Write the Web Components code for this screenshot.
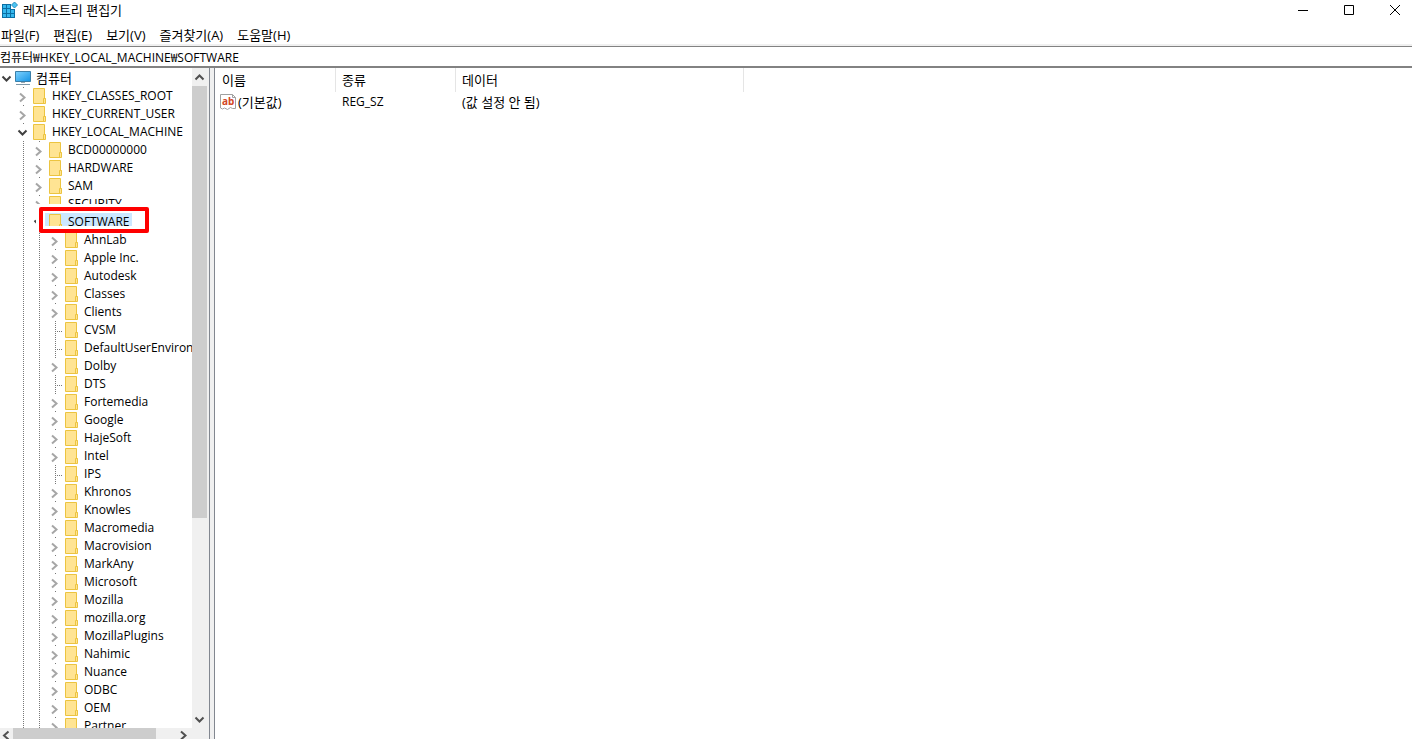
<!DOCTYPE html>
<html lang="ko">
<head>
<meta charset="utf-8">
<title>레지스트리 편집기</title>
<style>
    body {
        margin: 0;
        height: 100vh;
        overflow: hidden;
        background: #fff;
        color: #000;
        font-family: "Open Sans", "Noto Sans CJK KR", sans-serif;
        font-size: 12px;
    }
</style>
</head>
<body>
<reg-window></reg-window>

<script>
const chevrons = {
    right: '<svg width="11" height="11" viewBox="0 0 11 11"><path d="M3 1.5 7.5 5.5 3 9.5" fill="none" stroke="currentColor" stroke-width="2"/></svg>',
    left: '<svg width="11" height="11" viewBox="0 0 11 11"><path d="M7.5 1.5 3 5.5 7.5 9.5" fill="none" stroke="currentColor" stroke-width="2"/></svg>',
    down: '<svg width="11" height="11" viewBox="0 0 11 11"><path d="M1.5 3.5 5.5 7.5 9.5 3.5" fill="none" stroke="currentColor" stroke-width="2"/></svg>',
    up: '<svg width="11" height="11" viewBox="0 0 11 11"><path d="M1.5 7.5 5.5 3.5 9.5 7.5" fill="none" stroke="currentColor" stroke-width="2"/></svg>'
};

const folderIcon = `
    <svg width="16" height="18" viewBox="0 0 16 18" preserveAspectRatio="xMinYMin slice">
        <path d="M2.5 1.5h11v10h1v5h-12z" fill="#ffe493" stroke="#ecc440"/>
        <path d="M12.5 16v-4.5h2" fill="none" stroke="#ecc440"/>
    </svg>`;

const computerIcon = `
    <svg width="16" height="18" viewBox="0 0 16 18">
        <defs>
            <linearGradient id="screen" x2="1" y2="1">
                <stop offset="0" stop-color="#7fd3ff"/>
                <stop offset="1" stop-color="#1593e4"/>
            </linearGradient>
        </defs>
        <path d="M.5 2.5h15v10H.5z" fill="url(#screen)" stroke="#3b7fa8"/>
        <path d="M6 13h4v1H6z" fill="#9aa9b3"/>
        <path d="M1 15.5h14" stroke="#7d97a8"/>
    </svg>`;

class RegTitlebar extends HTMLElement {
    constructor() {
        super();
        this.attachShadow({ mode: 'open' });
        this.shadowRoot.innerHTML = `
            <style>
                :host {
                    display: flex;
                    align-items: center;
                    height: 20px;
                    padding-bottom: 2px;
                }
                .logo { display: block; margin: 0 5px 0 2px; }
                h1 { flex: 1; margin: 0; font-size: 13px; font-weight: normal; line-height: 18px; }
                button {
                    width: 46px;
                    height: 20px;
                    padding: 0;
                    border: 0;
                    background: none;
                    display: grid;
                    place-items: center;
                }
                button:last-child { margin-right: -6px; }
            </style>
            <svg class="logo" width="16" height="18" viewBox="0 0 16 18">
                <path d="M0 3h9v5h4v9H0z" fill="#0b6fa4"/>
                <path d="M1 4h3v3H1zM5 4h3v3H5zM1 8h3v4H1zM5 8h3v4H5zM9 9h3v3H9zM1 13h3v3H1zM5 13h3v3H5zM9 13h3v3H9z" fill="#35b8ee"/>
                <path d="M12.5 1 15.5 4 12.5 7 9.5 4z" fill="#4cc4f2" stroke="#2a8fc0"/>
            </svg>
            <h1><slot></slot></h1>
            <button aria-label="최소화"><svg width="10" height="10"><path d="M0 5.5h10" stroke="#000"/></svg></button>
            <button aria-label="최대화"><svg width="10" height="10"><path d="M.5.5h9v9h-9z" fill="none" stroke="#000"/></svg></button>
            <button aria-label="닫기"><svg width="10" height="10"><path d="M0 0 10 10M10 0 0 10" stroke="#000"/></svg></button>
        `;
    }
}
customElements.define('reg-titlebar', RegTitlebar);

class RegMenubar extends HTMLElement {
    constructor() {
        super();
        this.attachShadow({ mode: 'open' });
        this.shadowRoot.innerHTML = `
            <style>
                :host {
                    display: flex;
                    gap: 14px;
                    padding: 4px 1px 0;
                    border-bottom: 2px solid #f0f0f0;
                }
                button {
                    padding: 0;
                    border: 0;
                    background: none;
                    color: inherit;
                    font: inherit;
                    font-size: 13px;
                    line-height: 18px;
                }
            </style>
        `;
        for (const label of ['파일(F)', '편집(E)', '보기(V)', '즐겨찾기(A)', '도움말(H)']) {
            const button = document.createElement('button');
            button.textContent = label;
            this.shadowRoot.appendChild(button);
        }
    }
}
customElements.define('reg-menubar', RegMenubar);

class RegAddress extends HTMLElement {
    constructor() {
        super();
        this.attachShadow({ mode: 'open' });
        this.shadowRoot.innerHTML = `
            <style>
                :host {
                    display: flex;
                    border-top: 1px solid #828282;
                    border-bottom: 2px solid #828282;
                }
                input {
                    flex: 1;
                    height: 19px;
                    padding: 0;
                    border: 0;
                    outline: 0;
                    background: none;
                    color: inherit;
                    font: inherit;
                }
            </style>
            <input aria-label="주소">
        `;
        this.shadowRoot.querySelector('input').value = this.getAttribute('value');
    }
}
customElements.define('reg-address', RegAddress);

class RegScrollbar extends HTMLElement {
    constructor() {
        super();
        this.attachShadow({ mode: 'open' });
        const horizontal = this.hasAttribute('horizontal');
        this.shadowRoot.innerHTML = `
            <style>
                :host {
                    display: flex;
                    flex-direction: column;
                    background: #f0f0f0;
                    overflow: hidden;
                }
                :host([horizontal]) { flex-direction: row; }
                button {
                    flex: none;
                    width: 15px;
                    height: 18px;
                    padding: 0;
                    border: 0;
                    background: none;
                    color: #505050;
                    display: grid;
                    place-items: center;
                }
                :host([horizontal]) button { width: 13px; height: 14px; }
                :host([horizontal]) button:last-child { width: 18px; }
                svg { display: block; }
                .track { flex: 1; display: flex; flex-direction: inherit; }
                .thumb { flex: 0 0 var(--thumb); background: #cdcdcd; }
                :host(:not([horizontal])) .thumb { width: 15px; }
            </style>
            <button aria-label="이전">${horizontal ? chevrons.left : chevrons.up}</button>
            <div class="track"><div class="thumb"></div></div>
            <button aria-label="다음">${horizontal ? chevrons.right : chevrons.down}</button>
        `;
    }
}
customElements.define('reg-scrollbar', RegScrollbar);

class RegKey extends HTMLElement {
    constructor() {
        super();
        this.attachShadow({ mode: 'open' });
        const level = Number(this.getAttribute('level'));
        const state = this.getAttribute('state');
        let guides = '';
        for (let i = 0; i < level; i++) {
            guides += `<i class="guide${i ? ' line' : ''}"></i>`;
        }
        let toggle = '';
        if (state === 'open') toggle = `<button class="open" aria-label="축소">${chevrons.down}</button>`;
        if (state === 'closed') toggle = `<button aria-label="확장">${chevrons.right}</button>`;
        this.shadowRoot.innerHTML = `
            <style>
                :host {
                    --dots: repeating-linear-gradient(#777 0 1px, transparent 1px 2px);
                    display: flex;
                    position: relative;
                    height: 18px;
                    line-height: 18px;
                    white-space: nowrap;
                }
                :host([level="0"]) { font-size: 13px; }
                .guide { flex: none; width: 16px; }
                .line { background: var(--dots) 7px 0 / 1px 18px no-repeat; }
                .toggle {
                    flex: none;
                    width: 15px;
                    background: linear-gradient(#777, #777) 7px 0 / 1px 1px no-repeat;
                }
                :host([level="0"]) .toggle { background: none; }
                .leaf {
                    background:
                        var(--dots) 7px 0 / 1px 18px no-repeat,
                        repeating-linear-gradient(90deg, #777 0 1px, transparent 1px 2px) 7px 10px / 7px 1px no-repeat;
                }
                button {
                    display: block;
                    margin: 5px 0 0 1px;
                    padding: 0;
                    border: 0;
                    background: none;
                    color: #a6a6a6;
                }
                .open { margin-top: 4px; color: #404040; }
                svg { display: block; }
                .item { display: flex; gap: 5px; }
                :host([clipped]) .toggle, :host([clipped]) .item { height: 9px; overflow: hidden; }
                :host([selected]) { z-index: 1; }
                :host([selected]) .toggle { background: none; }
                :host([selected]) .toggle button { width: 3px; overflow: hidden; }
                :host([selected]) .item {
                    height: 13px;
                    margin-left: -2px;
                    padding: 0 3px 0 2px;
                    background: #cce8ff;
                }
                :host([selected]) .item svg { height: 13px; }
                .mark {
                    position: absolute;
                    left: 39px;
                    top: -6px;
                    width: 102px;
                    height: 18px;
                    border: 4px solid #fe0000;
                    border-radius: 2px;
                }
            </style>
            ${guides}
            <span class="toggle${state ? '' : ' leaf'}">${toggle}</span>
            <span class="item">${level ? folderIcon : computerIcon}<span><slot></slot></span></span>
            ${this.hasAttribute('selected') ? '<span class="mark"></span>' : ''}
        `;
    }
}
customElements.define('reg-key', RegKey);

const keys = [
    [0, 'open', '컴퓨터'],
    [1, 'closed', 'HKEY_CLASSES_ROOT'],
    [1, 'closed', 'HKEY_CURRENT_USER'],
    [1, 'open', 'HKEY_LOCAL_MACHINE'],
    [2, 'closed', 'BCD00000000'],
    [2, 'closed', 'HARDWARE'],
    [2, 'closed', 'SAM'],
    [2, 'closed', 'SECURITY', 'clipped'],
    [2, 'open', 'SOFTWARE', 'selected'],
    [3, 'closed', 'AhnLab'],
    [3, 'closed', 'Apple Inc.'],
    [3, 'closed', 'Autodesk'],
    [3, 'closed', 'Classes'],
    [3, 'closed', 'Clients'],
    [3, '', 'CVSM'],
    [3, '', 'DefaultUserEnvironment'],
    [3, 'closed', 'Dolby'],
    [3, '', 'DTS'],
    [3, 'closed', 'Fortemedia'],
    [3, 'closed', 'Google'],
    [3, 'closed', 'HajeSoft'],
    [3, 'closed', 'Intel'],
    [3, '', 'IPS'],
    [3, 'closed', 'Khronos'],
    [3, 'closed', 'Knowles'],
    [3, 'closed', 'Macromedia'],
    [3, 'closed', 'Macrovision'],
    [3, 'closed', 'MarkAny'],
    [3, 'closed', 'Microsoft'],
    [3, 'closed', 'Mozilla'],
    [3, 'closed', 'mozilla.org'],
    [3, 'closed', 'MozillaPlugins'],
    [3, 'closed', 'Nahimic'],
    [3, 'closed', 'Nuance'],
    [3, 'closed', 'ODBC'],
    [3, 'closed', 'OEM'],
    [3, 'closed', 'Partner']
];

class RegTree extends HTMLElement {
    constructor() {
        super();
        this.attachShadow({ mode: 'open' });
        this.shadowRoot.innerHTML = `
            <style>
                :host {
                    display: grid;
                    grid-template-columns: minmax(0, 1fr) 17px;
                    grid-template-rows: minmax(0, 1fr) 11px;
                    box-sizing: border-box;
                    width: 210px;
                    border-right: 1px solid #828790;
                    background: #f0f0f0;
                }
                .keys { overflow: hidden; padding-top: 1px; background: #fff; }
                .vertical { --thumb: 432px; }
                .horizontal { --thumb: 143px; }
            </style>
            <div class="keys">
                ${keys.map(([level, state, name, flag]) =>
                    `<reg-key level="${level}" state="${state}" ${flag || ''}>${name}</reg-key>`).join('')}
            </div>
            <reg-scrollbar class="vertical"></reg-scrollbar>
            <reg-scrollbar class="horizontal" horizontal></reg-scrollbar>
        `;
    }
}
customElements.define('reg-tree', RegTree);

class RegValues extends HTMLElement {
    constructor() {
        super();
        this.attachShadow({ mode: 'open' });
        this.shadowRoot.innerHTML = `
            <style>
                :host { display: block; flex: 1; border-left: 1px solid #828790; }
                table { width: 529px; border-collapse: separate; border-spacing: 0; table-layout: fixed; font-size: 13px; line-height: 18px; }
                .name-col { width: 121px; }
                .type-col { width: 120px; }
                th, td { padding: 0 0 0 6px; text-align: left; font-weight: normal; white-space: nowrap; }
                th { height: 24px; border-right: 1px solid #e5e5e5; }
                th:first-child { padding-left: 7px; }
                td { height: 20px; }
                td:first-child { padding-left: 5px; }
                .name { display: flex; align-items: center; gap: 2px; }
                .type { font-size: 12px; }
            </style>
            <table>
                <colgroup><col class="name-col"><col class="type-col"><col></colgroup>
                <thead><tr><th>이름</th><th>종류</th><th>데이터</th></tr></thead>
                <tbody>
                    <tr>
                        <td><span class="name">
                            <svg width="16" height="16" viewBox="0 0 16 16">
                                <path d="M.5.5h12l3 3v11h-3l-2-1-3 2-3-1.5-2 1-2-1z" fill="#fff" stroke="#a0a0a0"/>
                                <path d="M12.5.5v3h3" fill="none" stroke="#a0a0a0"/>
                                <text x="2" y="11" font-family="Noto Sans" font-size="10" font-weight="bold" fill="#d24726">ab</text>
                            </svg>(기본값)</span></td>
                        <td class="type">REG_SZ</td>
                        <td>(값 설정 안 됨)</td>
                    </tr>
                </tbody>
            </table>
        `;
    }
}
customElements.define('reg-values', RegValues);

class RegWindow extends HTMLElement {
    constructor() {
        super();
        this.attachShadow({ mode: 'open' });
        this.shadowRoot.innerHTML = `
            <style>
                :host { display: flex; flex-direction: column; height: 100%; }
                main { flex: 1; display: flex; min-height: 0; }
                .splitter { width: 4px; background: #f0f0f0; }
            </style>
            <reg-titlebar>레지스트리 편집기</reg-titlebar>
            <reg-menubar></reg-menubar>
            <reg-address value="컴퓨터₩HKEY_LOCAL_MACHINE₩SOFTWARE"></reg-address>
            <main>
                <reg-tree></reg-tree>
                <div class="splitter"></div>
                <reg-values></reg-values>
            </main>
        `;
    }
}
customElements.define('reg-window', RegWindow);
</script>
</body>
</html>
